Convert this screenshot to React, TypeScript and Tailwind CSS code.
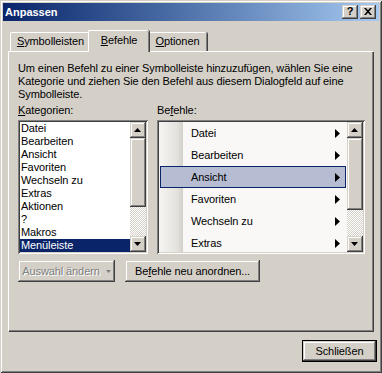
import React from 'react';

const raised =
  'bg-[#d4d0c8] shadow-[inset_-1px_-1px_#404040,inset_1px_1px_#d4d0c8,inset_-2px_-2px_#808080,inset_2px_2px_#ffffff]';
const sunken =
  'shadow-[inset_1px_1px_#808080,inset_-1px_-1px_#ffffff,inset_2px_2px_#404040,inset_-2px_-2px_#d4d0c8]';
const dither =
  'bg-[repeating-conic-gradient(#ffffff_0_25%,#d4d0c8_0_50%)] bg-[length:2px_2px]';

const categories = [
  'Datei',
  'Bearbeiten',
  'Ansicht',
  'Favoriten',
  'Wechseln zu',
  'Extras',
  'Aktionen',
  '?',
  'Makros',
  'Menüleiste',
];

const commands = ['Datei', 'Bearbeiten', 'Ansicht', 'Favoriten', 'Wechseln zu', 'Extras'];

function ScrollButton({ down }: { down?: boolean }) {
  return (
    <div className={`flex h-[16px] w-[16px] shrink-0 items-center justify-center ${raised}`}>
      <svg width="7" height="4" viewBox="0 0 7 4" className="-mt-px -ml-px">
        {down ? <polygon points="0,0 7,0 3.5,4" fill="#000" /> : <polygon points="3.5,0 7,4 0,4" fill="#000" />}
      </svg>
    </div>
  );
}

function ScrollBar({ thumbClass, trackClass }: { thumbClass: string; trackClass: string }) {
  return (
    <div className="flex w-[16px] shrink-0 flex-col">
      <ScrollButton />
      <div className={`${raised} ${thumbClass}`} />
      <div className={`${dither} ${trackClass}`} />
      <ScrollButton down />
    </div>
  );
}

function Tab({ label, accel, selected, className }: { label: string; accel: number; selected?: boolean; className: string }) {
  return (
    <div
      className={`flex items-start justify-center bg-[#d4d0c8] rounded-t-[2px] border-l border-t border-l-white border-t-white shadow-[inset_-1px_0_#808080,1px_0_#404040] ${
        selected ? 'relative z-10 -mx-[2px] -mb-px h-[22px] pt-[3px]' : 'h-[19px] pt-[2px]'
      } ${className}`}
    >
      <span>
        {label.slice(0, accel)}
        <span className="underline">{label[accel]}</span>
        {label.slice(accel + 1)}
      </span>
    </div>
  );
}

export default function App() {
  return (
    <div className="flex h-[373px] w-[382px] flex-col bg-[#d4d0c8] p-[3px] font-['Liberation_Sans',Arial,sans-serif] text-[11px] leading-[13px] tracking-[-0.1px] text-black shadow-[inset_1px_1px_#d4d0c8,inset_-1px_-1px_#404040,inset_2px_2px_#ffffff,inset_-2px_-2px_#808080]">
      {/* Title bar */}
      <div className="flex h-[18px] shrink-0 items-center justify-between bg-gradient-to-r from-[#0a246a] to-[#a6caf0] pl-[2px] pr-[3px]">
        <span className="font-bold tracking-normal text-white">Anpassen</span>
        <div className="flex gap-[2px]">
          <div className={`flex h-[14px] w-[16px] items-center justify-center ${raised}`}>
            <span className="-mt-px text-[11px] font-bold leading-none">?</span>
          </div>
          <div className={`flex h-[14px] w-[16px] items-center justify-center ${raised}`}>
            <svg width="8" height="7" viewBox="0 0 8 7" className="-mt-px">
              <path d="M0 0h2l2 2.2L6 0h2L5 3.5 8 7H6L4 4.8 2 7H0l3-3.5z" fill="#000" />
            </svg>
          </div>
        </div>
      </div>

      {/* Tabs */}
      <div className="ml-[5px] mr-[6px] mt-[9px] flex flex-col">
        <div className="flex h-[21px] items-end pl-[2px]">
          <Tab label="Symbolleisten" accel={0} className="w-[80px]" />
          <Tab label="Befehle" accel={0} selected className="w-[61px]" />
          <Tab label="Optionen" accel={0} className="w-[60px]" />
        </div>

        {/* Panel */}
        <div className="h-[280px] border-l border-t border-l-white border-t-white pl-[9px] pt-[10px] shadow-[inset_-1px_-1px_#808080,1px_1px_#404040]">
          <p className="whitespace-nowrap">
            Um einen Befehl zu einer Symbolleiste hinzuzufügen, wählen Sie eine
            <br />
            Kategorie und ziehen Sie den Befehl aus diesem Dialogfeld auf eine
            <br />
            Symbolleiste.
          </p>

          <div className="mt-[3px] flex gap-[9px]">
            {/* Kategorien */}
            <div className="flex w-[130px] flex-col">
              <span>
                <span className="underline">K</span>ategorien:
              </span>
              <div className={`mt-[3px] flex h-[134px] bg-white p-[2px] ${sunken}`}>
                <div className="flex flex-1 flex-col">
                  {categories.map((c) => (
                    <div
                      key={c}
                      className={`h-[13px] pl-[1px] ${c === 'Menüleiste' ? 'bg-[#0a246a] text-white' : ''}`}
                    >
                      {c}
                    </div>
                  ))}
                </div>
                <ScrollBar thumbClass="h-[69px]" trackClass="h-[29px]" />
              </div>
            </div>

            {/* Befehle */}
            <div className="flex w-[208px] flex-col">
              <span>
                Be<span className="underline">f</span>ehle:
              </span>
              <div className={`mt-[3px] flex h-[134px] bg-white p-[2px] ${sunken}`}>
                <div className="flex flex-1 flex-col overflow-hidden bg-[linear-gradient(to_right,#f6f5f3_0px,#e4e2dd_18px,#d3d0c9_24px,#f9f8f7_24px)]">
                  {commands.map((c) => (
                    <div key={c} className="h-[22px] shrink-0 px-[1px]">
                      <div
                        className={`flex h-full items-center justify-between border pl-[30px] pr-[5px] ${
                          c === 'Ansicht' ? 'border-[#0a246a] bg-[#b6bdd2]' : 'border-transparent'
                        }`}
                      >
                        <span>{c}</span>
                        <svg width="5" height="9" viewBox="0 0 5 9">
                          <polygon points="0,0 5,4.5 0,9" fill="#000" />
                        </svg>
                      </div>
                    </div>
                  ))}
                </div>
                <ScrollBar thumbClass="h-[72px]" trackClass="h-[26px]" />
              </div>
            </div>
          </div>

          <div className="mt-[6px] flex gap-[10px]">
            <div className={`flex h-[22px] w-[97px] items-center justify-center gap-[6px] ${raised}`}>
              <span className="text-[#808080] [text-shadow:1px_1px_0_#ffffff]">Auswahl ändern</span>
              <svg width="5" height="3" viewBox="0 0 5 3">
                <polygon points="0,0 5,0 2.5,3" fill="#808080" />
              </svg>
            </div>
            <div className={`flex h-[22px] w-[135px] items-center justify-center ${raised}`}>
              <span>
                Be<span className="underline">f</span>ehle neu anordnen...
              </span>
            </div>
          </div>
        </div>
      </div>

      {/* Footer */}
      <div className="mr-[2px] mt-[9px] flex justify-end">
        <div className="border border-black">
          <div className={`flex h-[20px] w-[73px] items-center justify-center ${raised}`}>Schließen</div>
        </div>
      </div>
    </div>
  );
}
